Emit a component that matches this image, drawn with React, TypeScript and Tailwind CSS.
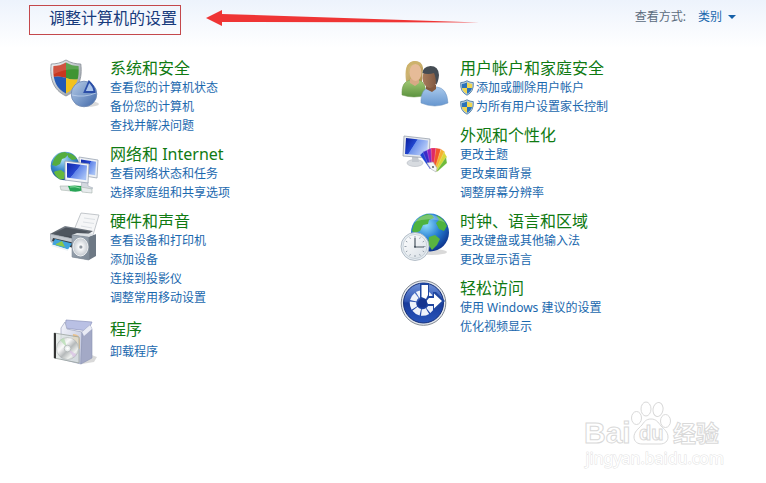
import type { ReactNode } from "react";

function SecurityIcon() {
  return (
    <svg viewBox="0 0 50 50" className="size-[50px]" aria-hidden="true">
      <defs>
        <clipPath id="sec-clip">
          <path d="M16 4.500c4 2.500 8 3.500 12.500 3.500C29.500 20 27 30 16 35.500 5 30 2.500 20 3.500 8 8 8 12 7 16 4.500z" />
        </clipPath>
        <linearGradient id="sec-rim" x1="0" y1="0" x2="1" y2="1">
          <stop offset="0" stopColor="#f4f6f8" />
          <stop offset="1" stopColor="#8b939c" />
        </linearGradient>
        <linearGradient id="sec-pie" x1="0" y1="0" x2="1" y2="1">
          <stop offset="0" stopColor="#b9cde6" />
          <stop offset=".5" stopColor="#7d9dcb" />
          <stop offset="1" stopColor="#3f65a6" />
        </linearGradient>
      </defs>
      <ellipse cx="37" cy="46" rx="12" ry="3" fill="#000" opacity=".15" />
      <path d="M16 2c5 3 10 4 14.800 4C32.500 20 29 32 16 38 3 32-.5 20 1.200 6 6 6 11 5 16 2z" fill="url(#sec-rim)" stroke="#858c94" strokeWidth=".8" />
      <g clipPath="url(#sec-clip)">
        <path d="M0 0h16v20q-8-3-16 0z" fill="#c8361f" />
        <path d="M16 0h16v20q-8 3-16 0z" fill="#3f9433" />
        <path d="M0 20q8-3 16 0v18H0z" fill="#2459b5" />
        <path d="M16 20q8 3 16 0v18H16z" fill="#f2c21d" />
        <path d="M0 0h32v12Q16 9 0 18z" fill="#fff" opacity=".15" />
      </g>
      <circle cx="34" cy="36" r="12.800" fill="url(#sec-pie)" stroke="#6d88b4" strokeWidth=".8" />
      <path d="M22 37q12 3 24-2" stroke="#c4d6ee" strokeWidth="1" fill="none" opacity=".7" />
      <path d="M34.500 34L39 23.500Q44 28 44.500 34z" fill="#aac4ea" stroke="#2c4fa8" strokeWidth="1.800" />
    </svg>
  );
}

function NetworkIcon() {
  return (
    <svg viewBox="0 0 50 52" className="h-[52px] w-[50px]" aria-hidden="true">
      <defs>
        <radialGradient id="net-globe" cx=".4" cy=".25" r=".8">
          <stop offset="0" stopColor="#b5e2f7" />
          <stop offset=".5" stopColor="#3a8acb" />
          <stop offset="1" stopColor="#164889" />
        </radialGradient>
        <linearGradient id="net-screen" x1="0" y1="0" x2="1" y2=".7">
          <stop offset="0" stopColor="#1028a8" />
          <stop offset=".5" stopColor="#2748d0" />
          <stop offset=".52" stopColor="#5f83e8" />
          <stop offset="1" stopColor="#a7c2f6" />
        </linearGradient>
      </defs>
      <circle cx="15" cy="22" r="14.300" fill="url(#net-globe)" />
      <path d="M4 15Q8 8 15 8l4 2-4 4-3 1-2 5-4 2-4-1zM18 9q6 1 9 6l-5 1-4-3z" fill="#55ad3f" />
      <path d="M6 27l5-1 4 3-1 6-4 .5Q5 32 4 28z" fill="#65b93e" />
      <path d="M29 13l19 3-1 18-18-3z" fill="#edf0f4" stroke="#9ca6b4" strokeWidth=".8" />
      <path d="M31 15.500l15 2.300-.8 13.500L31 29z" fill="url(#net-screen)" />
      <path d="M32 37l6 1v4l5 2-6 4-10-2 4-3z" fill="#d3d8df" stroke="#a5adb8" strokeWidth=".6" />
      <path d="M15 17l24 3-1 19-23-3z" fill="#f3f5f8" stroke="#98a3b2" strokeWidth=".8" />
      <path d="M17 19l20 2.600-.8 14.600L17 33.500z" fill="url(#net-screen)" />
      <path d="M10 42l9 0 2 5-10-1z" fill="#dfe4e4" stroke="#a6b3ac" strokeWidth=".6" />
      <path d="M18 42q7-1 13 0l2 4q-6 3-13 1z" fill="#29a456" />
      <path d="M20 43q5-1 10 1" stroke="#8ee0a4" fill="none" />
      <path d="M31 43l11 2v4l-10-1z" fill="#e8ecee" stroke="#a6b3ac" strokeWidth=".6" />
    </svg>
  );
}

function HardwareIcon() {
  return (
    <svg viewBox="0 0 50 50" className="size-[50px]" aria-hidden="true">
      <defs>
        <linearGradient id="hw-body" x1="0" y1="0" x2="0" y2="1">
          <stop offset="0" stopColor="#7d858e" />
          <stop offset="1" stopColor="#343a42" />
        </linearGradient>
        <linearGradient id="hw-spk" x1="0" y1="0" x2="1" y2="1">
          <stop offset="0" stopColor="#a3adb8" />
          <stop offset="1" stopColor="#7b8794" />
        </linearGradient>
        <radialGradient id="hw-cone">
          <stop offset="0" stopColor="#a5abb2" />
          <stop offset=".25" stopColor="#f8f9fa" />
          <stop offset="1" stopColor="#c5cad0" />
        </radialGradient>
      </defs>
      <path d="M31 2l18 2-6 20-19-5z" fill="#f5f6f7" stroke="#b5babf" strokeWidth=".8" />
      <path d="M34 7l11 1.500M33 11l11 1.500M31 15l11 2" stroke="#dce0e4" strokeWidth="1" />
      <path d="M0 23l15-8 28 5-14 9z" fill="url(#hw-body)" />
      <path d="M4 22.500l12-6 22 4-11 6z" fill="#4e555e" />
      <path d="M0 23l29 6v7L1 31z" fill="#c4c9cf" stroke="#8c949d" strokeWidth=".6" />
      <path d="M3 27l22 5-2 5L2 30z" fill="#333a42" />
      <path d="M5 28l17 4.500-4 6-16-5z" fill="#41a3dc" />
      <path d="M6 33l6-3 3 6-9-2z" fill="#8cc84a" />
      <path d="M2 33.500l16 5v1.500L1 35z" fill="#eef2f5" />
      <path d="M22 24l16 2 8-3v22l-7 4-17-3z" fill="#6d7884" />
      <path d="M22 24l5-2 19 1-8 3z" fill="#dde1e5" />
      <path d="M22 24l16.500 2 .5 23-17-3z" fill="url(#hw-spk)" stroke="#858f9a" strokeWidth=".6" />
      <ellipse cx="30.500" cy="36" rx="7.500" ry="9" fill="url(#hw-cone)" stroke="#eef0f2" />
      <circle cx="31" cy="36" r="1.500" fill="#8f97a0" />
    </svg>
  );
}

function ProgramsIcon() {
  return (
    <svg viewBox="0 0 50 50" className="size-[50px]" aria-hidden="true">
      <defs>
        <linearGradient id="prg-front" x1="0" y1="0" x2="1" y2="1">
          <stop offset="0" stopColor="#f4f5fb" />
          <stop offset="1" stopColor="#b9bfd8" />
        </linearGradient>
        <linearGradient id="prg-disc" x1="0" y1="0" x2="1" y2="1">
          <stop offset="0" stopColor="#b8c0bd" />
          <stop offset=".35" stopColor="#fafafa" />
          <stop offset=".55" stopColor="#b5b9ba" />
          <stop offset=".75" stopColor="#eef1ee" />
          <stop offset="1" stopColor="#9ea5a6" />
        </linearGradient>
      </defs>
      <path d="M32 48l12-2 3-5-8-3z" fill="#000" opacity=".15" />
      <path d="M16 4l26 2-4 9-23-3z" fill="#b9c0e4" stroke="#8c94bb" strokeWidth=".7" />
      <path d="M11 12l4-6 2 7 15 3-1 32-20-5z" fill="url(#prg-front)" stroke="#9ba2bd" strokeWidth=".7" />
      <path d="M32 16l8-7 2 4v29l-11 6z" fill="#a3a9c6" stroke="#8c94b4" strokeWidth=".6" />
      <path d="M32 16l8-7 2 4-8 7z" fill="#e9ebf5" />
      <path d="M23 18q7 0 7 7v8l-8-3z" fill="#eac18c" />
      <path d="M4 17l25 4v26L4 42z" fill="#dce3df" fillOpacity=".7" stroke="#9ca5a1" strokeWidth=".8" />
      <path d="M4 17l2 .3V42.500L4 42z" fill="#333" />
      <circle cx="17.500" cy="32.500" r="11" fill="url(#prg-disc)" stroke="#a5abab" strokeWidth=".5" />
      <path d="M17.500 32.500L10 24l4-2z" fill="#b9dfb5" opacity=".8" />
      <path d="M17.500 32.500l9 6-3 3z" fill="#d9bfe5" opacity=".7" />
      <circle cx="17.500" cy="32.500" r="3.300" fill="#e9eded" stroke="#a1a7a8" strokeWidth=".6" />
      <circle cx="17.500" cy="32.500" r="1.300" fill="#fff" />
    </svg>
  );
}

function UsersIcon() {
  return (
    <svg viewBox="0 0 50 50" className="size-[50px]" aria-hidden="true">
      <defs>
        <linearGradient id="usr-green" x1="0" y1="0" x2="0" y2="1">
          <stop offset="0" stopColor="#a3c975" />
          <stop offset="1" stopColor="#5c933f" />
        </linearGradient>
        <linearGradient id="usr-blue" x1="0" y1="0" x2="0" y2="1">
          <stop offset="0" stopColor="#a9c9ec" />
          <stop offset="1" stopColor="#6696cf" />
        </linearGradient>
        <linearGradient id="usr-hair" x1="0" y1="0" x2="1" y2="1">
          <stop offset="0" stopColor="#e0c98a" />
          <stop offset="1" stopColor="#a98c4a" />
        </linearGradient>
        <linearGradient id="usr-skin" x1="0" y1="0" x2="1" y2="0">
          <stop offset="0" stopColor="#a97c5c" />
          <stop offset="1" stopColor="#7d5640" />
        </linearGradient>
      </defs>
      <path d="M6 23q-1-8 0-12Q8 3 15 3q7 0 8 7l-1 14q-8 4-16-1z" fill="url(#usr-hair)" />
      <path d="M2 37q-1-13 8-15h8q8 1 8 15-12 4-24 0z" fill="url(#usr-green)" stroke="#6f994f" strokeWidth=".5" />
      <path d="M10 21h9v4l-4 3-5-3z" fill="#d8a985" />
      <ellipse cx="15.500" cy="14.500" rx="6" ry="8.500" fill="#e6bb98" />
      <path d="M8 17Q7 6 15 6q5 0 7 4-1-7-8-7-8 1-8 12z" fill="#cdb26c" />
      <path d="M21 45q-1-14 9-16h7q10 1 11 16-13 6-27 0z" fill="url(#usr-blue)" stroke="#6d93bf" strokeWidth=".5" />
      <path d="M26 27h10v4l-4 3-6-3z" fill="#83593f" />
      <ellipse cx="30" cy="20" rx="7.500" ry="10" fill="url(#usr-skin)" />
      <path d="M22.500 15q0-6 8-7 8 0 8.500 9-.5 7-3 10 0-8-2-12-6 2-11.500 0z" fill="#454c53" />
    </svg>
  );
}

function AppearanceIcon() {
  return (
    <svg viewBox="0 0 50 50" className="size-[50px]" aria-hidden="true">
      <defs>
        <linearGradient id="app-screen" x1="0" y1="0" x2="1" y2=".5">
          <stop offset="0" stopColor="#0a1c9a" />
          <stop offset=".45" stopColor="#2146cf" />
          <stop offset=".48" stopColor="#6f93ec" />
          <stop offset="1" stopColor="#b8cdf8" />
        </linearGradient>
      </defs>
      <ellipse cx="15" cy="38" rx="8" ry="3.500" fill="#d7dbe0" stroke="#b3b8bf" strokeWidth=".6" />
      <path d="M12 31h6l1 6h-7z" fill="#c4c9d0" />
      <path d="M4 11l26 3-1 19-26-2z" fill="#e6e9ee" stroke="#98a1ad" strokeWidth=".8" />
      <path d="M6 13l22 2.500-1 15.500-22-2z" fill="url(#app-screen)" />
      <g stroke="#fff" strokeWidth=".2">
        <path d="M30 44L20 30l4-4 9 17z" fill="#1d45d2" />
        <path d="M30 44L23 27l4-2 7 18z" fill="#3a2bc8" />
        <path d="M31 44L27 25l4-2 4 20z" fill="#8f24bd" />
        <path d="M32 44L31 23l5 0-1 20z" fill="#e02a63" />
        <path d="M33 45L36 23l5 1-5 20z" fill="#f2542a" />
        <path d="M34 46L41 24l4 3-8 18z" fill="#f4b22f" />
        <path d="M35 47L44 27l3 5-9 14z" fill="#d8d838" />
        <path d="M36 47L46 32l1 6-9 8z" fill="#6fbb3b" />
      </g>
      <path d="M27 38l6-1 4 6-1 4-5-3z" fill="#f5f6f8" stroke="#a8adb5" strokeWidth=".6" />
      <circle cx="33" cy="42" r=".9" fill="#3e444d" />
    </svg>
  );
}

function ClockIcon() {
  return (
    <svg viewBox="0 0 50 52" className="h-[52px] w-[50px]" aria-hidden="true">
      <defs>
        <radialGradient id="clk-globe" cx=".4" cy=".3" r=".75">
          <stop offset="0" stopColor="#8edcfb" />
          <stop offset=".5" stopColor="#267ed4" />
          <stop offset="1" stopColor="#0b2c86" />
        </radialGradient>
        <linearGradient id="clk-face" x1="0" y1="0" x2="1" y2="1">
          <stop offset="0" stopColor="#fff" />
          <stop offset="1" stopColor="#d8dfe6" />
        </linearGradient>
      </defs>
      <ellipse cx="32" cy="41" rx="15" ry="3" fill="#000" opacity=".15" />
      <circle cx="30" cy="21.500" r="19" fill="url(#clk-globe)" />
      <path d="M14 13q5-8 13-10l5 1 2 3-5 2-1 4-5 1-3 6-5 2-3-2zM36 4q8 3 11 11l-3 5-5-2-3-6 3-3z" fill="#4eb33f" />
      <path d="M29 26l6-2 5 4-3 6-5 5-4-6z" fill="#59b441" />
      <path d="M14 11Q30-4 46 12 30 5 14 11z" fill="#fff" opacity=".25" />
      <circle cx="15" cy="35.500" r="14" fill="#e7edf2" stroke="#a5b0bb" strokeWidth=".8" />
      <circle cx="15" cy="35.500" r="12" fill="url(#clk-face)" stroke="#bac5ce" strokeWidth=".7" />
      <path d="M15 25v2M15 44v2M4.500 35.500h2M23.500 35.500h2M9.700 26.400l.8 1.400M20.300 26.400l-.8 1.400M9.700 44.600l.8-1.400M20.300 44.600l-.8-1.400M5.900 30.200l1.400.8M24.100 30.200l-1.400.8M5.900 40.800l1.400-.8M24.100 40.800l-1.400-.8" stroke="#8d98a4" strokeWidth=".9" />
      <path d="M15 27v9h9" stroke="#4a5661" strokeWidth="1.200" fill="none" />
      <circle cx="15" cy="35.800" r="1" fill="#4a5661" />
    </svg>
  );
}

function EaseIcon() {
  return (
    <svg viewBox="0 0 50 50" className="size-[50px]" aria-hidden="true">
      <defs>
        <linearGradient id="ease-bg" x1="0" y1="0" x2="0" y2="1">
          <stop offset="0" stopColor="#6f92d8" />
          <stop offset=".45" stopColor="#3257b4" />
          <stop offset=".5" stopColor="#173a9b" />
          <stop offset="1" stopColor="#2855bb" />
        </linearGradient>
      </defs>
      <circle cx="23.500" cy="25" r="22.300" fill="#e4e8ee" stroke="#818891" strokeWidth="1" />
      <circle cx="23.500" cy="25" r="20" fill="url(#ease-bg)" stroke="#173078" />
      <g fill="none" stroke="#eef2fa" strokeWidth="6.500">
        <circle cx="22.500" cy="25" r="9.500" pathLength="80" strokeDasharray="8.600 1.400" strokeDashoffset="-3" />
      </g>
      <path d="M20 5h9v13h4v-4h3l9 9-9 9h-3v-4h-9l-4-7z" fill="#1f469f" />
      <path d="M21.500 7h6.500v10l-2 4-4.500-2z" fill="#fff" />
      <path d="M29 20h5v-4.500l8 7.500-8 7.500V26h-6l-1.500-3z" fill="#fff" />
      <circle cx="22.500" cy="25" r="4.500" fill="#16358f" />
    </svg>
  );
}

function ShieldIcon() {
  return (
    <svg viewBox="0 0 14 16" className="h-4 w-[14px] shrink-0" aria-hidden="true">
      <path d="M7 .8Q10 2.600 13.300 2.600 14 12 7 15.200 0 12 .7 2.600 4 2.600 7 .8z" fill="#b9cfe0" stroke="#5f88ab" strokeWidth="1" />
      <path d="M7 2.500v5.500H2Q1.500 6 1.900 3.900 4.500 3.800 7 2.500z" fill="#2a72b8" />
      <path d="M7 2.500v5.500h5q.5-2 .1-4.100Q9.500 3.800 7 2.500z" fill="#f0d650" />
      <path d="M7 8v5.800Q2.800 11.800 2 8z" fill="#f0d650" />
      <path d="M7 8v5.800Q11.200 11.800 12 8z" fill="#2a72b8" />
    </svg>
  );
}

type Category = {
  title: string;
  icon: ReactNode;
  links: string[];
  elevated?: boolean;
};

const leftColumn: Category[] = [
  { title: "系统和安全", icon: <SecurityIcon />, links: ["查看您的计算机状态", "备份您的计算机", "查找并解决问题"] },
  { title: "网络和 Internet", icon: <NetworkIcon />, links: ["查看网络状态和任务", "选择家庭组和共享选项"] },
  { title: "硬件和声音", icon: <HardwareIcon />, links: ["查看设备和打印机", "添加设备", "连接到投影仪", "调整常用移动设置"] },
  { title: "程序", icon: <ProgramsIcon />, links: ["卸载程序"] },
];

const rightColumn: Category[] = [
  { title: "用户帐户和家庭安全", icon: <UsersIcon />, links: ["添加或删除用户帐户", "为所有用户设置家长控制"], elevated: true },
  { title: "外观和个性化", icon: <AppearanceIcon />, links: ["更改主题", "更改桌面背景", "调整屏幕分辨率"] },
  { title: "时钟、语言和区域", icon: <ClockIcon />, links: ["更改键盘或其他输入法", "更改显示语言"] },
  { title: "轻松访问", icon: <EaseIcon />, links: ["使用 Windows 建议的设置", "优化视频显示"] },
];

function CategorySection({ title, icon, links, elevated }: Category) {
  const single = links.length === 1;
  return (
    <section className="flex items-start gap-[10px]">
      <div className="h-[50px] w-[50px] shrink-0">{icon}</div>
      <div className={single ? "flex flex-col gap-[3px] pt-[3px]" : "flex flex-col"}>
        <h2 className="text-base leading-5 text-[#0f7a12]">
          <a href="#" className="hover:underline">{title}</a>
        </h2>
        <ul className="text-xs leading-[19px] text-[#1a68ae]">
          {links.map((link) => (
            <li key={link}>
              <a href="#" className="flex items-center gap-[2px] hover:underline">
                {elevated && <ShieldIcon />}
                {link}
              </a>
            </li>
          ))}
        </ul>
      </div>
    </section>
  );
}

function Column({ items }: { items: Category[] }) {
  return (
    <div className="flex flex-col gap-[9px]">
      {items.map((item) => (
        <CategorySection key={item.title} {...item} />
      ))}
    </div>
  );
}

function Watermark() {
  return (
    <footer className="mt-auto mr-[42px] mb-[17px] flex flex-col self-end text-white">
      <svg viewBox="0 0 140 50" className="h-[50px] w-[140px]" role="img" aria-label="Baidu 经验">
        <g fill="#fff" stroke="#d9d9d9" strokeWidth="1">
          <text x="3" y="43" fontSize="30" fontWeight="700" fontFamily="Liberation Sans, sans-serif">Bai</text>
          <ellipse cx="55.500" cy="18" rx="5" ry="6.500" />
          <ellipse cx="65" cy="9" rx="5" ry="7" />
          <ellipse cx="77" cy="9.500" rx="5" ry="7" transform="rotate(10 77 9.500)" />
          <ellipse cx="84.500" cy="21" rx="5" ry="6.500" />
          <path d="M70 19c-5 0-7 3-9 6-4 4-8 7-8 12 0 5 4 7 8 7h18c5 0 8-3 8-7 0-5-4-8-7-11-3-4-5-7-10-7z" />
          <text x="58" y="40" fontSize="20" fontWeight="700" fontFamily="Liberation Sans, sans-serif">du</text>
          <text x="92" y="42" fontSize="23" fontWeight="700" fontFamily="Noto Sans CJK SC, sans-serif">经验</text>
        </g>
      </svg>
      <span className="pl-1 text-base leading-4 [-webkit-text-stroke:1px_#e2e2e2] [paint-order:stroke_fill]">jingyan.baidu.com</span>
    </footer>
  );
}

export default function App() {
  return (
    <div className="flex min-h-screen flex-col bg-white bg-[linear-gradient(to_bottom,#edf3fc,#ffffff_48px)] font-['Noto_Sans','Noto_Sans_CJK_SC',sans-serif]">
      <header className="flex items-start pt-[5px] pr-[30px] pl-[29px]">
        <div className="border border-[#c4484c] pr-[3px] pb-1 pl-[19px]">
          <h1 className="text-base leading-6 text-[#173b7c]">调整计算机的设置</h1>
        </div>
        <svg viewBox="0 0 273 16" className="mt-[5px] ml-[25px] h-4 w-[273px] shrink-0" aria-hidden="true">
          <path d="M0 8L16 0v4l257 8.500L16 12v4z" fill="#ef3535" />
        </svg>
        <div className="ml-auto flex items-center text-xs leading-6">
          <label htmlFor="view-by" className="text-[#5b6b7c]">查看方式:</label>
          <div className="relative ml-3 flex items-center">
            <select id="view-by" defaultValue="category" className="w-[38px] appearance-none bg-transparent text-[#1a68ae] outline-none">
              <option value="category">类别</option>
            </select>
            <svg viewBox="0 0 8 4" className="pointer-events-none absolute right-0 h-1 w-2" aria-hidden="true">
              <path d="M0 0h8L4 4z" fill="#1560a8" />
            </svg>
          </div>
        </div>
      </header>
      <main className="grid grid-cols-2 pt-[23px] pr-4 pl-[50px]">
        <Column items={leftColumn} />
        <Column items={rightColumn} />
      </main>
      <Watermark />
    </div>
  );
}
